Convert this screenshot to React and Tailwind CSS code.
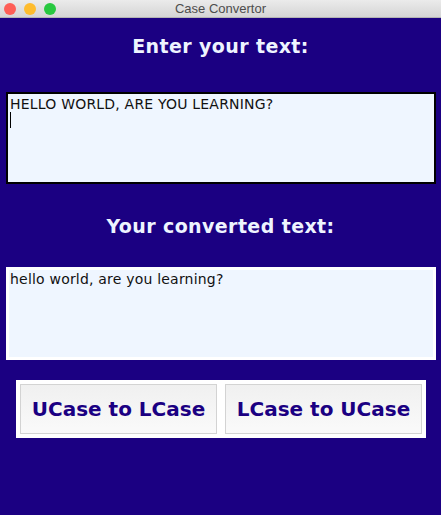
import { useState } from 'react';

const font = { fontFamily: '"DejaVu Sans", Verdana, sans-serif' };

const TitleBar = () => (
  <div className="relative h-[18px] bg-gradient-to-b from-[#ebebeb] to-[#d5d5d5] border-b border-[#b4b4b4] flex items-center justify-center">
    <div className="absolute left-[4px] top-[3px] flex gap-[8px]">
      <span className="w-[12px] h-[12px] rounded-full bg-[#fe5f57]" />
      <span className="w-[12px] h-[12px] rounded-full bg-[#febc2e]" />
      <span className="w-[12px] h-[12px] rounded-full bg-[#28c840]" />
    </div>
    <span className="text-[13px] leading-none text-[#4d4d4d] font-['Liberation_Sans',sans-serif]">Case Convertor</span>
  </div>
);

const App = () => {
  const [input, setInput] = useState('HELLO WORLD, ARE YOU LEARNING?\n');
  const [output, setOutput] = useState('hello world, are you learning?');

  return (
    <div className="w-[441px] h-[515px] flex flex-col overflow-hidden" style={font}>
      <TitleBar />
      <div className="flex-1 bg-[#1b0082] px-[6px] flex flex-col">
        <h1 className="mt-[16px] text-center text-[19px] font-bold leading-[24px] tracking-[0.4px] text-[#eef4ff]">
          Enter your text:
        </h1>
        <div className="relative mt-[34px] w-[430px] h-[92px]">
          <textarea
            value={input}
            onChange={(e) => setInput(e.target.value)}
            className="w-full h-full resize-none border-2 border-black bg-[#eff6ff] px-[2px] py-[2px] text-[14px] leading-[17px] tracking-[0.2px] text-[#111] outline-none"
          />
          {/* caret */}
          <span className="pointer-events-none absolute left-[4px] top-[20px] w-[1px] h-[16px] bg-black" />
        </div>
        <h2 className="mt-[30px] text-center text-[19px] font-bold leading-[24px] tracking-[0.4px] text-[#eef4ff]">
          Your converted text:
        </h2>
        <textarea
          value={output}
          readOnly
          className="mt-[29px] w-[430px] h-[93px] resize-none border-[3px] border-white bg-[#eff6ff] px-[1px] py-[1px] text-[14px] leading-[17px] tracking-[0.2px] text-[#111] outline-none"
        />
        <div className="mt-[20px] ml-[10px] w-[410px] h-[58px] bg-white p-[4px] flex gap-[8px]">
          <button
            onClick={() => setOutput(input.toLowerCase())}
            className="w-[197px] h-[50px] border border-[#d3d3d3] bg-gradient-to-b from-[#f0f0f0] to-[#fafafa] text-[20px] font-bold text-[#1b0082]"
          >
            UCase to LCase
          </button>
          <button
            onClick={() => setOutput(input.toUpperCase())}
            className="w-[197px] h-[50px] border border-[#d3d3d3] bg-gradient-to-b from-[#f0f0f0] to-[#fafafa] text-[20px] font-bold text-[#1b0082]"
          >
            LCase to UCase
          </button>
        </div>
      </div>
    </div>
  );
};

export default App;
